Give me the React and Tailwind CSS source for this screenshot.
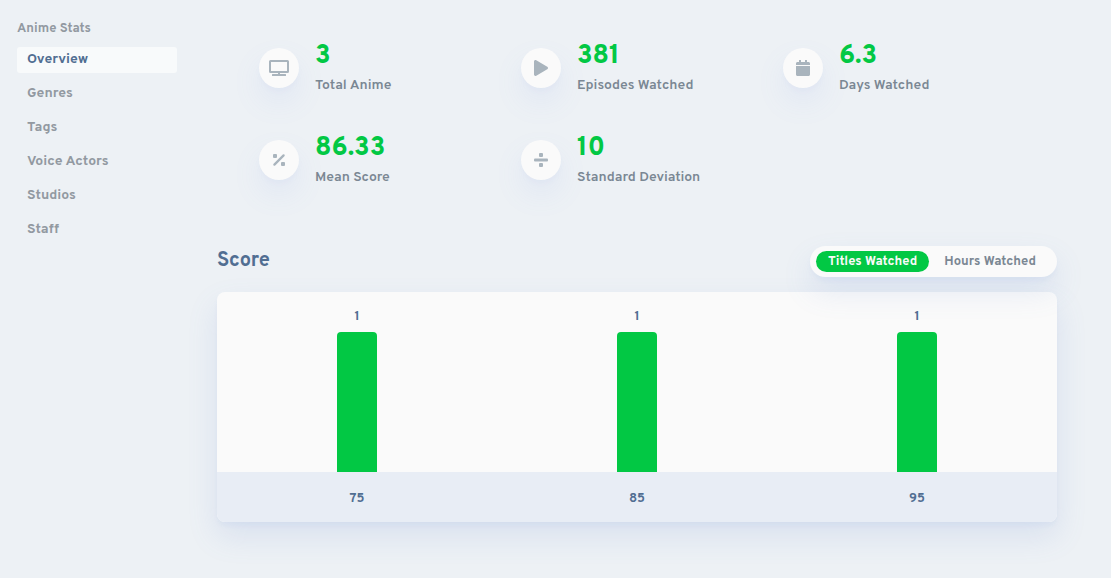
import { useState } from "react";
import { FaTv, FaPlay, FaCalendar } from "react-icons/fa";

function PercentIcon(props) {
  return (
    <svg viewBox="0 0 16 16" fill="currentColor" {...props}>
      <rect x="2" y="2" width="4" height="4" rx="1" />
      <rect x="10" y="10" width="4" height="4" rx="1" />
      <path d="M3.4 12.6 12.6 3.4" stroke="currentColor" strokeWidth="2.3" strokeLinecap="round" />
    </svg>
  );
}

function DivideIcon(props) {
  return (
    <svg viewBox="0 0 16 16" fill="currentColor" {...props}>
      <rect x="6" y="1" width="4" height="4" rx="1" />
      <rect x="1" y="6.5" width="14" height="3" rx="1" />
      <rect x="6" y="11" width="4" height="4" rx="1" />
    </svg>
  );
}

const sections = ["Overview", "Genres", "Tags", "Voice Actors", "Studios", "Staff"];

const stats = [
  { icon: FaTv, value: "3", label: "Total Anime", size: "h-[18px] w-5" },
  { icon: FaPlay, value: "381", label: "Episodes Watched", size: "h-4 w-4" },
  { icon: FaCalendar, value: "6.3", label: "Days Watched", size: "h-4 w-4" },
  { icon: PercentIcon, value: "86.33", label: "Mean Score", size: "h-4 w-4" },
  { icon: DivideIcon, value: "10", label: "Standard Deviation", size: "h-4 w-4" },
];

const scores = [
  { score: 75, titles: 1, hours: 1 },
  { score: 85, titles: 1, hours: 1 },
  { score: 95, titles: 1, hours: 1 },
];

const modes = [
  { key: "titles", label: "Titles Watched" },
  { key: "hours", label: "Hours Watched" },
];

function Sidebar() {
  return (
    <nav aria-label="Anime Stats" className="w-40 shrink-0 pt-[9px]">
      <h2 className="text-[13px] leading-4 font-bold text-[#9299a1]">Anime Stats</h2>
      <ul className="mt-[10px] flex flex-col gap-2">
        {sections.map((name, i) => (
          <li key={name}>
            <a
              href="#"
              className={
                i === 0
                  ? "block rounded-[3px] bg-[#f8fafb] px-[10px] py-[3px] text-sm leading-5 font-bold text-[#516e92]"
                  : "block rounded-[3px] px-[10px] py-[3px] text-sm leading-5 font-bold text-[#9299a1]"
              }
            >
              {name}
            </a>
          </li>
        ))}
      </ul>
    </nav>
  );
}

function Stat({ icon: Icon, value, label, size }) {
  return (
    <div className="flex items-center gap-4">
      <div className="flex h-10 w-10 shrink-0 items-center justify-center rounded-full bg-[#fafafa] text-[#a9b4bd] shadow-[0_14px_30px_rgba(120,150,240,0.1),0_4px_4px_rgba(120,150,240,0.04)]">
        <Icon className={size} aria-hidden="true" />
      </div>
      <div className="whitespace-nowrap">
        <div className="text-[26px] leading-[34px] font-extrabold text-[#02c844]">{value}</div>
        <div className="mt-0.5 text-sm leading-5 font-semibold text-[#7a8793]">{label}</div>
      </div>
    </div>
  );
}

function ScoreChart() {
  const [mode, setMode] = useState("titles");
  const max = Math.max(...scores.map((s) => s[mode]));
  return (
    <section className="mt-[58px]">
      <div className="flex items-start justify-between">
        <h2 className="text-xl leading-[30px] font-bold text-[#516e92]">Score</h2>
        <div className="relative flex h-[31px] items-center gap-[3px] rounded-full bg-[#fafafa] pr-[9px] pl-1.5 shadow-[0_14px_30px_rgba(103,132,210,0.15),0_4px_4px_rgba(103,132,210,0.05)]">
          {modes.map(({ key, label }) => (
            <button
              key={key}
              type="button"
              aria-pressed={mode === key}
              onClick={() => setMode(key)}
              className={
                mode === key
                  ? "h-[21px] rounded-full bg-[#02c844] px-3 text-[13px] leading-5 font-bold text-[#fafafa]"
                  : "h-[21px] rounded-full px-3 text-[13px] leading-5 font-bold text-[#7a8793]"
              }
            >
              {label}
            </button>
          ))}
        </div>
      </div>
      <div className="mt-[15px] overflow-hidden rounded-lg bg-[#fafafa] text-center text-[13px] leading-4 font-bold text-[#516e92] shadow-[0_14px_30px_rgba(103,132,210,0.15),0_4px_4px_rgba(103,132,210,0.05)]">
        <div className="grid h-[180px] grid-cols-3">
          {scores.map((s) => (
            <div key={s.score} className="flex flex-col items-center justify-end gap-[7px]">
              <span>{s[mode]}</span>
              <div
                className="w-10 rounded-t bg-[#02c844]"
                style={{ height: (s[mode] / max) * 140 }}
              />
            </div>
          ))}
        </div>
        <div className="grid h-[50px] grid-cols-3 items-center bg-[#e8edf5] pt-[3px]">
          {scores.map((s) => (
            <span key={s.score}>{s.score}</span>
          ))}
        </div>
      </div>
    </section>
  );
}

export default function App() {
  return (
    <div className="flex min-h-screen gap-10 bg-[#edf1f5] pt-3 pr-[54px] pb-14 pl-[17px] font-['Overpass','Roboto',sans-serif]">
      <Sidebar />
      <main className="min-w-0 flex-1 pt-7">
        <div className="grid grid-cols-3 gap-x-[30px] gap-y-9 px-[42px]">
          {stats.map((s) => (
            <Stat key={s.label} {...s} />
          ))}
        </div>
        <ScoreChart />
      </main>
    </div>
  );
}
